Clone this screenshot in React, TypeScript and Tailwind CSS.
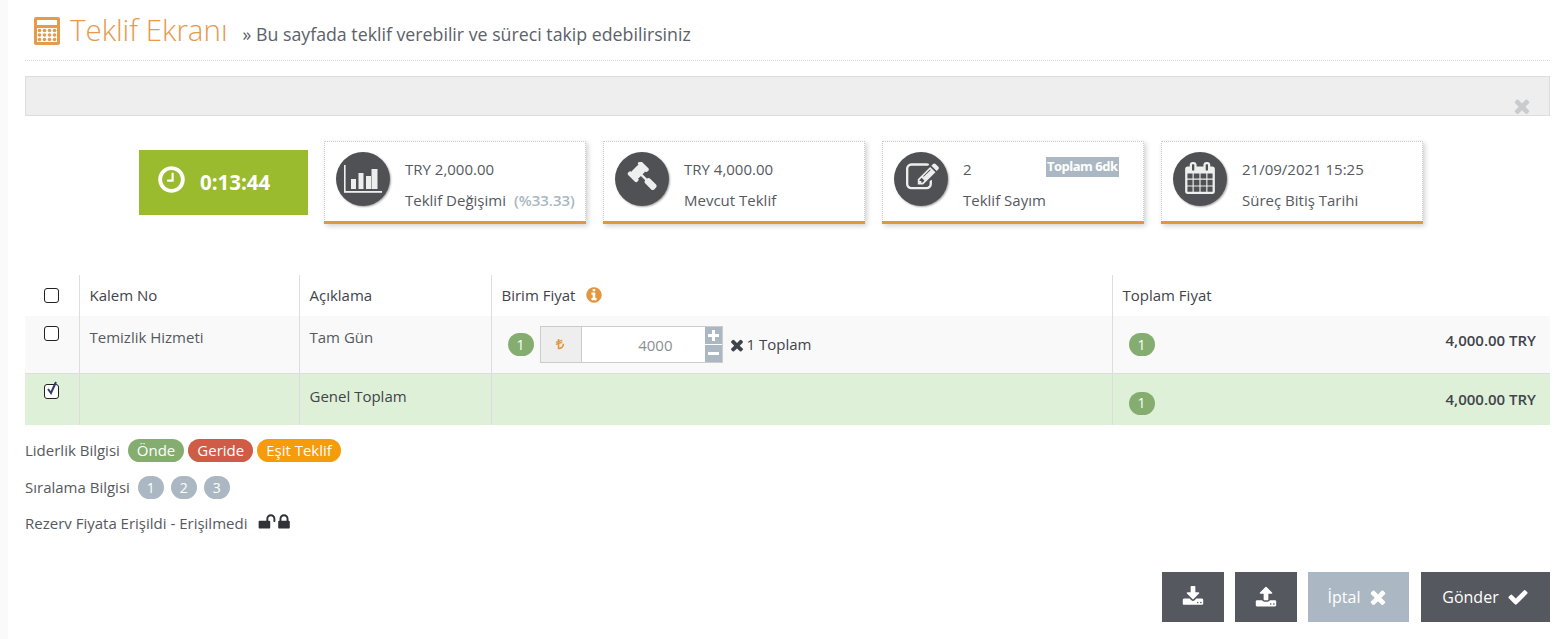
import React from "react";

// font awesome 4 shapes, the icon packages only carry the newer drawings
const paths = {
  times:
    "M1490 1322q0 40-28 68l-136 136q-28 28-68 28t-68-28l-294-294-294 294q-28 28-68 28t-68-28l-136-136q-28-28-28-68t28-68l294-294-294-294q-28-28-28-68t28-68l136-136q28-28 68-28t68 28l294 294 294-294q28-28 68-28t68 28l136 136q28 28 28 68t-28 68l-294 294 294 294q28 28 28 68z",
  check:
    "M1671 566q0 40-28 68l-724 724-136 136q-28 28-68 28t-68-28l-136-136-362-362q-28-28-28-68t28-68l136-136q28-28 68-28t68 28l294 295 656-657q28-28 68-28t68 28l136 136q28 28 28 68z",
  download:
    "M1344 1344q0-26-19-45t-45-19-45 19-19 45 19 45 45 19 45-19 19-45zm256 0q0-26-19-45t-45-19-45 19-19 45 19 45 45 19 45-19 19-45zm128-224v320q0 40-28 68t-68 28h-1472q-40 0-68-28t-28-68v-320q0-40 28-68t68-28h465l135 136q58 56 136 56t136-56l136-136h464q40 0 68 28t28 68zm-325-569q17 41-14 70l-448 448q-18 19-45 19t-45-19l-448-448q-31-29-14-70 17-39 59-39h256v-448q0-26 19-45t45-19h256q26 0 45 19t19 45v448h256q42 0 59 39z",
  upload:
    "M1344 1472q0-26-19-45t-45-19-45 19-19 45 19 45 45 19 45-19 19-45zm256 0q0-26-19-45t-45-19-45 19-19 45 19 45 45 19 45-19 19-45zm128-224v320q0 40-28 68t-68 28h-1472q-40 0-68-28t-28-68v-320q0-40 28-68t68-28h427q21 56 70.5 92t110.5 36h256q61 0 110.5-36t70.5-92h427q40 0 68 28t28 68zm-325-648q-17 40-59 40h-256v448q0 26-19 45t-45 19h-256q-26 0-45-19t-19-45v-448h-256q-42 0-59-40-17-39 14-69l448-448q18-19 45-19t45 19l448 448q31 30 14 69z",
  lock:
    "M640 768h512v-192q0-106-75-181t-181-75-181 75-75 181v192zm832 96v576q0 40-28 68t-68 28h-960q-40 0-68-28t-28-68v-576q0-40 28-68t68-28h32v-192q0-184 132-316t316-132 316 132 132 316v192h32q40 0 68 28t28 68z",
  unlock:
    "M1728 576v256q0 26-19 45t-45 19h-64q-26 0-45-19t-19-45v-256q0-106-75-181t-181-75-181 75-75 181v192h96q40 0 68 28t28 68v576q0 40-28 68t-68 28h-960q-40 0-68-28t-28-68v-576q0-40 28-68t68-28h672v-192q0-185 131.5-316.5t316.5-131.5 316.5 131.5 131.5 316.5z",
  info:
    "M1152 1376v-160q0-14-9-23t-23-9h-96v-512q0-14-9-23t-23-9h-320q-14 0-23 9t-9 23v160q0 14 9 23t23 9h96v320h-96q-14 0-23 9t-9 23v160q0 14 9 23t23 9h448q14 0 23-9t9-23zm-128-896v-160q0-14-9-23t-23-9h-192q-14 0-23 9t-9 23v160q0 14 9 23t23 9h192q14 0 23-9t9-23zm640 416q0 209-103 385.5t-279.5 279.5-385.5 103-385.5-103-279.5-279.5-103-385.5 103-385.5 279.5-279.5 385.5-103 385.5 103 279.5 279.5 103 385.5z",
  clock:
    "M1024 544v448q0 14-9 23t-23 9h-320q-14 0-23-9t-9-23v-64q0-14 9-23t23-9h224v-352q0-14 9-23t23-9h64q14 0 23 9t9 23zm416 352q0-148-73-273t-198-198-273-73-273 73-198 198-73 273 73 273 198 198 273 73 273-73 198-198 73-273zm224 0q0 209-103 385.5t-279.5 279.5-385.5 103-385.5-103-279.5-279.5-103-385.5 103-385.5 279.5-279.5 385.5-103 385.5 103 279.5 279.5 103 385.5z",
  gavel:
    "M1771 1440q0 53-37 90l-107 108q-39 37-91 37-53 0-90-37l-363-364q-38-36-38-90 0-53 43-96l-256-256-126 126q-14 14-34 14t-34-14q2 2 12.5 12t12.5 13 10 11.5 10 13.5 6 13.5 5.5 16.5 1.5 18q0 38-28 68-3 3-16.5 18t-19 20.5-18.5 16.5-22 15.5-22 9-26 4.5q-40 0-68-28l-408-408q-28-28-28-68 0-13 4.5-26t9-22 15.5-22 16.5-18.5 20.5-19 18-16.5q30-28 68-28 10 0 18 1.5t16.5 5.5 13.5 6 13.5 10 11.5 10 13 12.5 12 12.5q-14-14-14-34t14-34l348-348q14-14 34-14t34 14q-2-2-12.5-12t-12.5-13-10-11.5-10-13.5-6-13.5-5.5-16.5-1.5-18q0-38 28-68 3-3 16.5-18t19-20.5 18.5-16.5 22-15.5 22-9 26-4.5q40 0 68 28l408 408q28 28 28 68 0 13-4.5 26t-9 22-15.5 22-16.5 18.5-20.5 19-18 16.5q-30 28-68 28-10 0-18-1.5t-16.5-5.5-13.5-6-13.5-10-11.5-10-13-12.5-12-12.5q14 14 14 34t-14 34l-126 126 256 256q43-43 96-43 52 0 91 37l363 363q37 39 37 91z",
  edit:
    "M888 1184l116-116-152-152-116 116v56h96v96h56zm440-720q-16-16-33 1l-350 350q-17 17-1 33t33-1l350-350q17-17 1-33zm80 594v190q0 119-84.5 203.5t-203.5 84.5h-832q-119 0-203.5-84.5t-84.5-203.5v-832q0-119 84.5-203.5t203.5-84.5h832q63 0 117 25 15 7 18 23 3 17-9 29l-49 49q-14 14-32 8-23-6-45-6h-832q-66 0-113 47t-47 113v832q0 66 47 113t113 47h832q66 0 113-47t47-113v-126q0-13 9-22l64-64q15-15 35-9t20 29zm-96-738l288 288-672 672h-288v-288zm444 132l-92 92-288-288 92-92q28-28 68-28t68 28l152 152q28 28 28 68t-28 68z",
  calendar:
    "M192 1664h288v-288h-288v288zm352 0h320v-288h-320v288zm-352-352h288v-320h-288v320zm352 0h320v-320h-320v320zm-352-384h288v-288h-288v288zm736 736h320v-288h-320v288zm-384-736h320v-288h-320v288zm768 736h288v-288h-288v288zm-384-352h320v-320h-320v320zm-352-864v-288q0-13-9.5-22.5t-22.5-9.5h-64q-13 0-22.5 9.5t-9.5 22.5v288q0 13 9.5 22.5t22.5 9.5h64q13 0 22.5-9.5t9.5-22.5zm736 864h288v-320h-288v320zm-384-384h320v-288h-320v288zm384 0h288v-288h-288v288zm32-480v-288q0-13-9.5-22.5t-22.5-9.5h-64q-13 0-22.5 9.5t-9.5 22.5v288q0 13 9.5 22.5t22.5 9.5h64q13 0 22.5-9.5t9.5-22.5zm384-64v1280q0 52-38 90t-90 38h-1408q-52 0-90-38t-38-90v-1280q0-52 38-90t90-38h128v-96q0-66 47-113t113-47h64q66 0 113 47t47 113v96h384v-96q0-66 47-113t113-47h64q66 0 113 47t47 113v96h128q52 0 90 38t38 90z",
  lira:
    "M1408 832q0 191-94.5 353t-256.5 256.5-353 94.5h-160q-14 0-23-9t-9-23v-611l-215 66q-3 1-9 1-10 0-19-6-13-10-13-26v-128q0-23 23-31l233-71v-93l-215 66q-3 1-9 1-10 0-19-6-13-10-13-26v-128q0-23 23-31l233-71v-250q0-14 9-23t23-9h160q14 0 23 9t9 23v181l375-116q15-5 28 5t13 26v128q0 23-23 31l-393 121v93l375-116q15-5 28 5t13 26v128q0 23-23 31l-393 121v487q188-13 318-151t130-328q0-14 9-23t23-9h160q14 0 23 9t9 23z",
};

const Fa = ({ name, size, className = "" }: { name: keyof typeof paths; size: number; className?: string }) => (
  <svg width={size} height={size} viewBox="0 0 1792 1792" fill="currentColor" className={`shrink-0 ${className}`}>
    <path d={paths[name]} />
  </svg>
);

const CalculatorIcon = () => (
  <svg width="26" height="28" viewBox="0 0 26 28" className="fill-[#e59a4c]">
    <path
      fillRule="evenodd"
      d="M2 0h22a2 2 0 0 1 2 2v24a2 2 0 0 1-2 2H2a2 2 0 0 1-2-2V2a2 2 0 0 1 2-2zm1 3v5h20V3H3zm0 8v14h20V11H3z"
    />
    {[13.5, 18, 22.5].map((y) =>
      [5.5, 10.5, 15.5, 20.5].map((x) => <circle key={`${x}-${y}`} cx={x} cy={y} r="1.8" />)
    )}
  </svg>
);

const BarChartIcon = () => (
  <svg width="38" height="28" viewBox="0 0 38 28" className="fill-[#eeeeee]">
    <rect x="0" y="0" width="1.6" height="27" />
    <rect x="0" y="26" width="38" height="1.8" />
    <rect x="7" y="14" width="5" height="10" />
    <rect x="14.5" y="8" width="5" height="16" />
    <rect x="22" y="11" width="5" height="13" />
    <rect x="27.5" y="4" width="6" height="20" />
  </svg>
);

const StatCard = ({
  icon,
  top,
  bottom,
  extra,
  badge,
}: {
  icon: React.ReactNode;
  top: string;
  bottom: string;
  extra?: string;
  badge?: string;
}) => (
  <div className="w-[262px] h-[83px] relative flex items-start bg-white border border-dotted border-[#c8c8c8] border-b-0 shadow-[2px_2px_5px_rgba(0,0,0,0.18)]">
    <div className="mt-[10px] ml-[11px] w-[54px] h-[54px] rounded-full bg-[#4f5155] shadow-[1px_1px_2px_rgba(0,0,0,0.35)] flex items-center justify-center shrink-0">
      {icon}
    </div>
    <div className="ml-[15px] pt-[17px] text-[15px] leading-[20px] text-[#555a60] whitespace-nowrap">
      <div>{top}</div>
      <div className="mt-[11px]">
        {bottom}
        {extra && <span className="ml-[8px] font-semibold text-[#a9b7c1]">{extra}</span>}
      </div>
    </div>
    {badge && (
      <span className="absolute left-[163px] top-[15px] h-[20px] px-[1px] bg-[#abb8c3] text-white text-[13px] leading-[19px] font-bold tracking-[-0.5px]">
        {badge}
      </span>
    )}
    <div className="absolute -left-px -right-px bottom-0 h-[3px] bg-[#e2963f]" />
  </div>
);

const Num = ({ children, color = "bg-[#84ad6f]" }: { children: React.ReactNode; color?: string }) => (
  <span className={`${color} inline-flex items-center justify-center w-[26px] h-[23px] rounded-full text-white text-[14px] leading-none shrink-0`}>
    {children}
  </span>
);

const Box = ({ checked }: { checked?: boolean }) => (
  <div className="relative w-[15px] h-[15px] mx-auto">
    <input
      type="checkbox"
      readOnly
      className="appearance-none block w-[15px] h-[15px] rounded-[3px] border border-[#222] bg-white"
    />
    {checked && (
      <svg width="14" height="16" viewBox="0 0 14 16" className="absolute left-[1px] -top-[3px]">
        <path d="M3 8l3 4 5-11" fill="none" stroke="#333a6b" strokeWidth="2" />
      </svg>
    )}
  </div>
);

const Pill = ({ color, children }: { color: string; children: React.ReactNode }) => (
  <span className={`${color} h-[23px] px-[9px] rounded-full text-white text-[15px] leading-[22px] inline-block`}>
    {children}
  </span>
);

const FootBtn = ({ className, children }: { className: string; children: React.ReactNode }) => (
  <button className={`${className} h-[50px] flex items-center justify-center text-white text-[16px]`}>{children}</button>
);

export default function App() {
  return (
    <div className="h-[639px] overflow-hidden flex bg-white text-[#555a60] font-['Open_Sans',sans-serif] text-[15px]">
      <div className="w-[8px] bg-[#fafafa] shrink-0" />
      <div className="flex-1 pl-[17px] pr-[6px]">
        <div className="h-[61px] flex items-start border-b border-dotted border-[#d5d5d5]">
          <div className="mt-[17px] ml-[9px]">
            <CalculatorIcon />
          </div>
          <h1 className="ml-[10px] mt-[10px] text-[29.5px] leading-[40px] font-light text-[#e59a4c] whitespace-nowrap">
            Teklif Ekranı
          </h1>
          <span className="ml-[15px] mt-[22px] text-[17.75px] leading-[24px] text-[#5b6268] whitespace-nowrap">
            » Bu sayfada teklif verebilir ve süreci takip edebilirsiniz
          </span>
        </div>

        <div className="mt-[15px] h-[40px] bg-[#eeeeee] border border-[#dddddd] relative">
          <Fa name="times" size={22} className="absolute right-[16px] top-[18px] text-[#c8cccf]" />
        </div>

        <div className="mt-[25px] flex pl-[114px]">
          <div className="mt-[9px] w-[169px] h-[65px] bg-[#9bbb2f] flex items-center text-white shrink-0">
            <Fa name="clock" size={31} className="ml-[17px] -mt-[7px]" />
            <span className="ml-[13px] text-[20.5px] font-bold">0:13:44</span>
          </div>
          <div className="ml-[16px] flex gap-[17px]">
            <StatCard icon={<BarChartIcon />} top="TRY 2,000.00" bottom="Teklif Değişimi" extra="(%33.33)" />
            <StatCard icon={<Fa name="gavel" size={30} className="text-[#eeeeee] -mt-[4px]" />} top="TRY 4,000.00" bottom="Mevcut Teklif" />
            <StatCard icon={<Fa name="edit" size={33} className="text-[#eeeeee] ml-[3px] -mt-[3px]" />} top="2" bottom="Teklif Sayım" badge="Toplam 6dk" />
            <StatCard icon={<Fa name="calendar" size={32} className="text-[#eeeeee] -mt-[2px]" />} top="21/09/2021 15:25" bottom="Süreç Bitiş Tarihi" />
          </div>
        </div>

        <table className="mt-[51px] w-[1525px] table-fixed border-collapse text-[15px]">
          <colgroup>
            <col className="w-[54px]" />
            <col className="w-[220px]" />
            <col className="w-[192px]" />
            <col className="w-[621px]" />
            <col />
          </colgroup>
          <thead>
            <tr className="h-[41px] text-[#3f444a] text-left">
              <th className="font-medium"><Box /></th>
              <th className="font-medium pl-[10px] border-l border-[#dddddd]">Kalem No</th>
              <th className="font-medium pl-[10px] border-l border-[#dddddd]">Açıklama</th>
              <th className="font-medium pl-[10px] border-l border-[#dddddd]">
                <span className="inline-flex items-center">
                  Birim Fiyat
                  <Fa name="info" size={18} className="ml-[10px] -mt-[2px] text-[#e2963f]" />
                </span>
              </th>
              <th className="font-medium pl-[10px] border-l border-[#dddddd]">Toplam Fiyat</th>
            </tr>
          </thead>
          <tbody>
            <tr className="h-[57px] bg-[#f9f9f9] border-b border-[#dddddd] align-top">
              <td className="pt-[10px]"><Box /></td>
              <td className="pl-[10px] pt-[10px] border-l border-[#dddddd]">Temizlik Hizmeti</td>
              <td className="pl-[10px] pt-[10px] border-l border-[#dddddd]">Tam Gün</td>
              <td className="pl-[16px] pt-[10px] border-l border-[#dddddd]">
                <div className="flex items-center">
                  <Num>1</Num>
                  <div className="ml-[6px] flex h-[37px] w-[183px] border border-[#cccccc] bg-white">
                    <div className="w-[41px] bg-[#eeeeee] border-r border-[#cccccc] flex items-center justify-center text-[#e2963f]">
                      <Fa name="lira" size={13} />
                    </div>
                    <div className="flex-1 text-right pr-[32px] leading-[37px] text-[#8a8f94]">4000</div>
                    <div className="w-[17px] flex flex-col gap-px bg-white">
                      <div className="flex-1 bg-[#abb8c3] flex items-center justify-center">
                        <svg width="11" height="11" viewBox="0 0 11 11" className="fill-white">
                          <path d="M4 0h3v4h4v3H7v4H4V7H0V4h4z" />
                        </svg>
                      </div>
                      <div className="flex-1 bg-[#abb8c3] flex items-center justify-center">
                        <svg width="11" height="3" viewBox="0 0 11 3" className="fill-white">
                          <rect width="11" height="3" />
                        </svg>
                      </div>
                    </div>
                  </div>
                  <Fa name="times" size={18} className="ml-[5px] text-[#3f444a]" />
                  <span className="ml-[1px] font-medium text-[#3f444a]">1 Toplam</span>
                </div>
              </td>
              <td className="pl-[16px] pr-[14px] pt-[17px] border-l border-[#dddddd]">
                <div className="flex items-center justify-between">
                  <Num>1</Num>
                  <span className="-mt-[8px] font-semibold text-[#3f444a]">4,000.00 TRY</span>
                </div>
              </td>
            </tr>
            <tr className="h-[52px] bg-[#dff0d8] align-top">
              <td className="pt-[10px]"><Box checked /></td>
              <td className="border-l border-[#dddddd]" />
              <td className="pl-[10px] pt-[11px] border-l border-[#dddddd] font-medium text-[#3f444a]">Genel Toplam</td>
              <td className="border-l border-[#dddddd]" />
              <td className="pl-[16px] pr-[14px] pt-[18px] border-l border-[#dddddd]">
                <div className="flex items-center justify-between">
                  <Num>1</Num>
                  <span className="-mt-[8px] font-semibold text-[#3f444a]">4,000.00 TRY</span>
                </div>
              </td>
            </tr>
          </tbody>
        </table>

        <div className="mt-[14px] flex items-center h-[23px]">
          <span>Liderlik Bilgisi</span>
          <span className="ml-[8px] flex gap-[4px]">
            <Pill color="bg-[#84ad6f]">Önde</Pill>
            <Pill color="bg-[#d05b47]">Geride</Pill>
            <Pill color="bg-[#f59b0c]">Eşit Teklif</Pill>
          </span>
        </div>
        <div className="mt-[14px] flex items-center h-[23px]">
          <span>Sıralama Bilgisi</span>
          <span className="ml-[8px] flex gap-[7px]">
            <Num color="bg-[#abb8c3]">1</Num>
            <Num color="bg-[#abb8c3]">2</Num>
            <Num color="bg-[#abb8c3]">3</Num>
          </span>
        </div>
        <div className="mt-[13px] flex items-center h-[23px]">
          <span>Rezerv Fiyata Erişildi - Erişilmedi</span>
          <Fa name="unlock" size={18} className="ml-[11px] -mt-[3px] text-[#2f3337]" />
          <Fa name="lock" size={18} className="-ml-px -mt-[3px] text-[#2f3337]" />
        </div>

        <div className="mt-[37px] flex justify-end">
          <FootBtn className="w-[62px] bg-[#55585e]"><Fa name="download" size={22} /></FootBtn>
          <FootBtn className="ml-[11px] w-[62px] bg-[#55585e]"><Fa name="upload" size={22} /></FootBtn>
          <FootBtn className="ml-[11px] w-[101px] bg-[#abb8c3] gap-[7px]">
            İptal <Fa name="times" size={22} />
          </FootBtn>
          <FootBtn className="ml-[12px] w-[129px] bg-[#55585e] gap-[8px]">
            Gönder <Fa name="check" size={22} />
          </FootBtn>
        </div>
      </div>
    </div>
  );
}
